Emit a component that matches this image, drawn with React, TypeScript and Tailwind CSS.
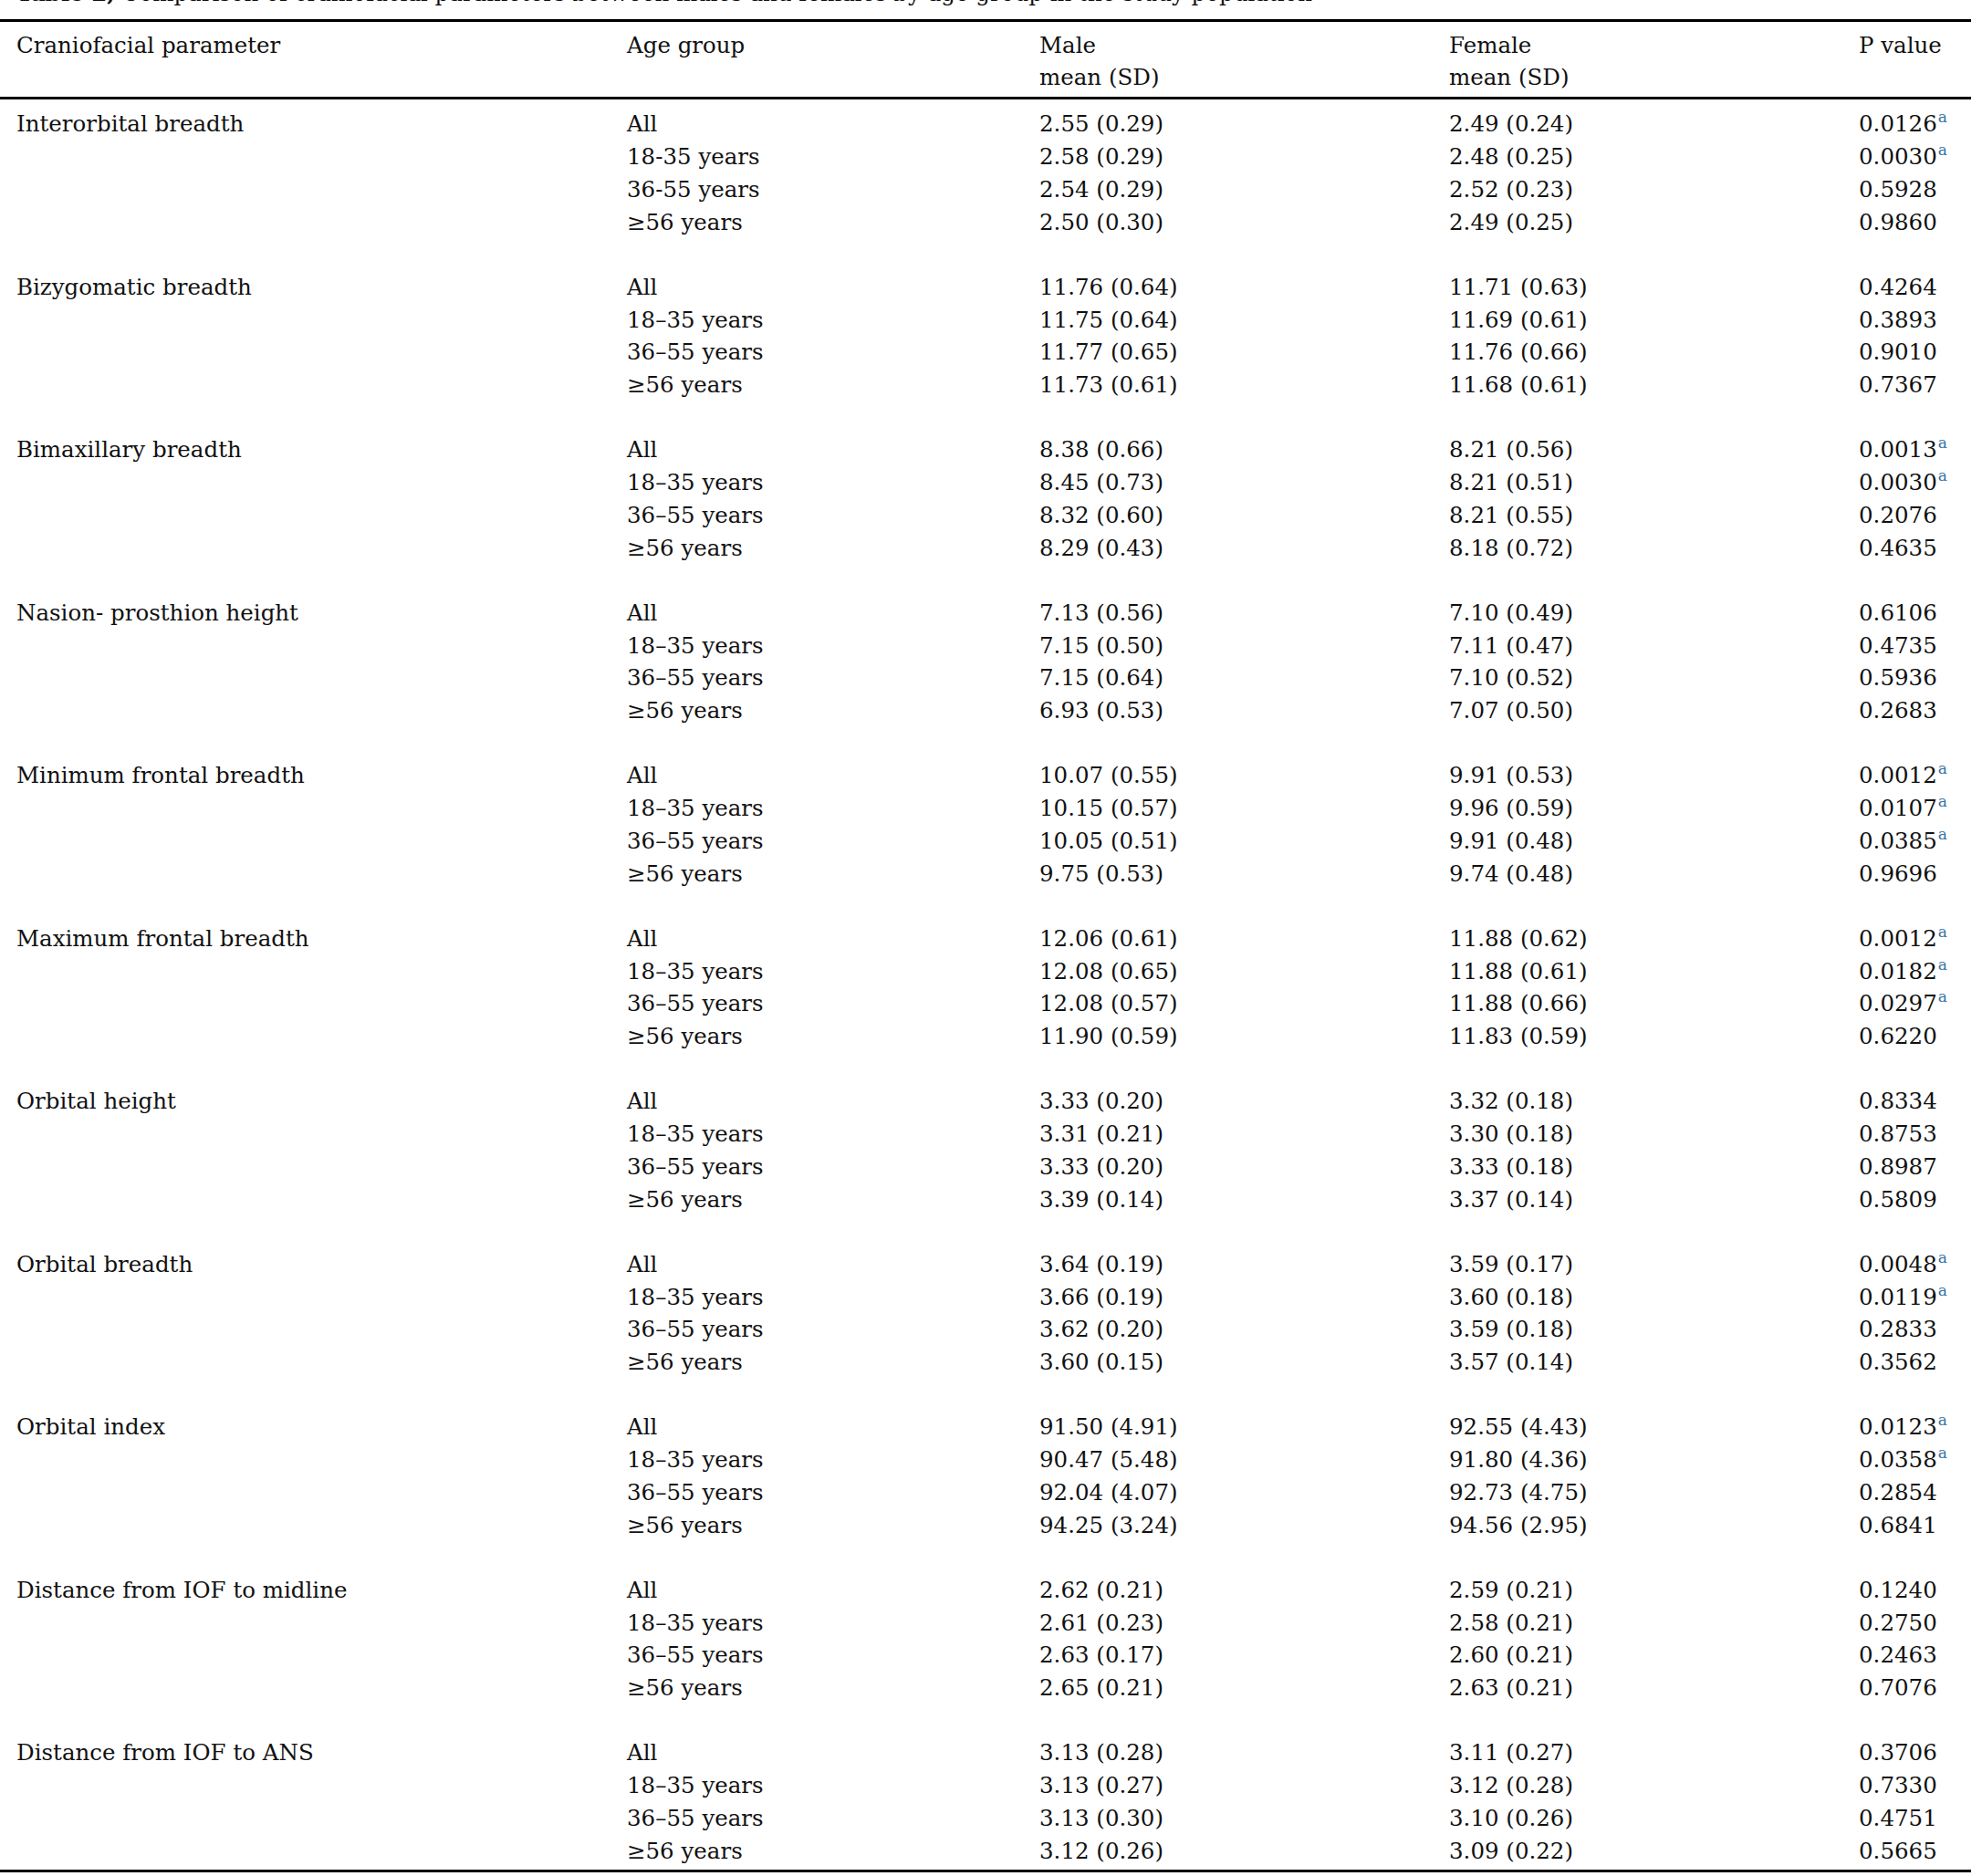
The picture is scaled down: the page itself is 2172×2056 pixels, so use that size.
type Row = { age: string; male: string; female: string; p: string; sig?: boolean }
type Group = { name: string; rows: Row[] }

const ages = ['All', '18–35 years', '36–55 years', '≥56 years']

function g(name: string, data: [string, string, string, boolean?][], hyphen = false): Group {
  return {
    name,
    rows: data.map(([male, female, p, sig], i) => ({
      age: hyphen ? ages[i].replace('–', '-') : ages[i],
      male,
      female,
      p,
      sig,
    })),
  }
}

const groups: Group[] = [
  g(
    'Interorbital breadth',
    [
      ['2.55 (0.29)', '2.49 (0.24)', '0.0126', true],
      ['2.58 (0.29)', '2.48 (0.25)', '0.0030', true],
      ['2.54 (0.29)', '2.52 (0.23)', '0.5928'],
      ['2.50 (0.30)', '2.49 (0.25)', '0.9860'],
    ],
    true,
  ),
  g('Bizygomatic breadth', [
    ['11.76 (0.64)', '11.71 (0.63)', '0.4264'],
    ['11.75 (0.64)', '11.69 (0.61)', '0.3893'],
    ['11.77 (0.65)', '11.76 (0.66)', '0.9010'],
    ['11.73 (0.61)', '11.68 (0.61)', '0.7367'],
  ]),
  g('Bimaxillary breadth', [
    ['8.38 (0.66)', '8.21 (0.56)', '0.0013', true],
    ['8.45 (0.73)', '8.21 (0.51)', '0.0030', true],
    ['8.32 (0.60)', '8.21 (0.55)', '0.2076'],
    ['8.29 (0.43)', '8.18 (0.72)', '0.4635'],
  ]),
  g('Nasion- prosthion height', [
    ['7.13 (0.56)', '7.10 (0.49)', '0.6106'],
    ['7.15 (0.50)', '7.11 (0.47)', '0.4735'],
    ['7.15 (0.64)', '7.10 (0.52)', '0.5936'],
    ['6.93 (0.53)', '7.07 (0.50)', '0.2683'],
  ]),
  g('Minimum frontal breadth', [
    ['10.07 (0.55)', '9.91 (0.53)', '0.0012', true],
    ['10.15 (0.57)', '9.96 (0.59)', '0.0107', true],
    ['10.05 (0.51)', '9.91 (0.48)', '0.0385', true],
    ['9.75 (0.53)', '9.74 (0.48)', '0.9696'],
  ]),
  g('Maximum frontal breadth', [
    ['12.06 (0.61)', '11.88 (0.62)', '0.0012', true],
    ['12.08 (0.65)', '11.88 (0.61)', '0.0182', true],
    ['12.08 (0.57)', '11.88 (0.66)', '0.0297', true],
    ['11.90 (0.59)', '11.83 (0.59)', '0.6220'],
  ]),
  g('Orbital height', [
    ['3.33 (0.20)', '3.32 (0.18)', '0.8334'],
    ['3.31 (0.21)', '3.30 (0.18)', '0.8753'],
    ['3.33 (0.20)', '3.33 (0.18)', '0.8987'],
    ['3.39 (0.14)', '3.37 (0.14)', '0.5809'],
  ]),
  g('Orbital breadth', [
    ['3.64 (0.19)', '3.59 (0.17)', '0.0048', true],
    ['3.66 (0.19)', '3.60 (0.18)', '0.0119', true],
    ['3.62 (0.20)', '3.59 (0.18)', '0.2833'],
    ['3.60 (0.15)', '3.57 (0.14)', '0.3562'],
  ]),
  g('Orbital index', [
    ['91.50 (4.91)', '92.55 (4.43)', '0.0123', true],
    ['90.47 (5.48)', '91.80 (4.36)', '0.0358', true],
    ['92.04 (4.07)', '92.73 (4.75)', '0.2854'],
    ['94.25 (3.24)', '94.56 (2.95)', '0.6841'],
  ]),
  g('Distance from IOF to midline', [
    ['2.62 (0.21)', '2.59 (0.21)', '0.1240'],
    ['2.61 (0.23)', '2.58 (0.21)', '0.2750'],
    ['2.63 (0.17)', '2.60 (0.21)', '0.2463'],
    ['2.65 (0.21)', '2.63 (0.21)', '0.7076'],
  ]),
  g('Distance from IOF to ANS', [
    ['3.13 (0.28)', '3.11 (0.27)', '0.3706'],
    ['3.13 (0.27)', '3.12 (0.28)', '0.7330'],
    ['3.13 (0.30)', '3.10 (0.26)', '0.4751'],
    ['3.12 (0.26)', '3.09 (0.22)', '0.5665'],
  ]),
]

const cols = 'grid grid-cols-[669px_452px_449px_449px_1fr] pl-[18px]'

export default function App() {
  return (
    <div className="w-[2160px] bg-white font-['DejaVu_Serif',serif] text-[24.5px] leading-[35.7px] text-[#111]">
      {/* caption sits above the crop, only its descenders show */}
      <div className="h-[21px] overflow-hidden">
        <p className="-mt-[25px] whitespace-nowrap pl-[18px]">
          <span className="font-bold">Table 2,</span> Comparison of craniofacial parameters between males and
          females by age group in the study population
        </p>
      </div>

      <div className={`${cols} border-y-[3px] border-black pt-[7.5px] pb-[3.5px]`}>
        <div>Craniofacial parameter</div>
        <div>Age group</div>
        <div>
          Male
          <br />
          mean (SD)
        </div>
        <div>
          Female
          <br />
          mean (SD)
        </div>
        <div>P value</div>
      </div>

      <div className="flex flex-col gap-[35.7px] border-b-[3px] border-black pt-[9px] pb-[3px]">
        {groups.map((group) => (
          <div key={group.name} className={cols}>
            <div>{group.name}</div>
            <div>
              {group.rows.map((r) => (
                <div key={r.age}>{r.age}</div>
              ))}
            </div>
            <div>
              {group.rows.map((r, i) => (
                <div key={i}>{r.male}</div>
              ))}
            </div>
            <div>
              {group.rows.map((r, i) => (
                <div key={i}>{r.female}</div>
              ))}
            </div>
            <div>
              {group.rows.map((r, i) => (
                <div key={i} className="whitespace-nowrap">
                  {r.p}
                  {r.sig && <sup className="-top-[10px] ml-[1px] text-[17px] text-[#3474a4]">a</sup>}
                </div>
              ))}
            </div>
          </div>
        ))}
      </div>
    </div>
  )
}
